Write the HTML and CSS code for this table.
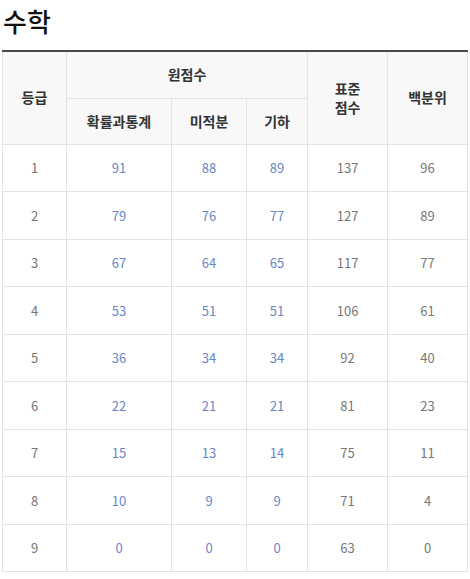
FILE: index.html
```html
<!DOCTYPE html>
<html lang="ko">
<head>
<meta charset="utf-8">
<link rel="stylesheet" href="styles.css">
</head>
<body>
<h2 class="title">수학</h2>
<table class="grade-table">
  <colgroup>
    <col class="c1"><col class="c2"><col class="c3"><col class="c4"><col class="c5"><col class="c6">
  </colgroup>
  <thead>
    <tr class="h1">
      <th rowspan="2">등급</th>
      <th colspan="3">원점수</th>
      <th rowspan="2">표준<br>점수</th>
      <th rowspan="2">백분위</th>
    </tr>
    <tr class="h2">
      <th>확률과통계</th>
      <th>미적분</th>
      <th>기하</th>
    </tr>
  </thead>
  <tbody>
    <tr><td>1</td><td class="raw">91</td><td class="raw">88</td><td class="raw">89</td><td>137</td><td>96</td></tr>
    <tr><td>2</td><td class="raw">79</td><td class="raw">76</td><td class="raw">77</td><td>127</td><td>89</td></tr>
    <tr><td>3</td><td class="raw">67</td><td class="raw">64</td><td class="raw">65</td><td>117</td><td>77</td></tr>
    <tr><td>4</td><td class="raw">53</td><td class="raw">51</td><td class="raw">51</td><td>106</td><td>61</td></tr>
    <tr><td>5</td><td class="raw">36</td><td class="raw">34</td><td class="raw">34</td><td>92</td><td>40</td></tr>
    <tr><td>6</td><td class="raw">22</td><td class="raw">21</td><td class="raw">21</td><td>81</td><td>23</td></tr>
    <tr><td>7</td><td class="raw">15</td><td class="raw">13</td><td class="raw">14</td><td>75</td><td>11</td></tr>
    <tr><td>8</td><td class="raw">10</td><td class="raw">9</td><td class="raw">9</td><td>71</td><td>4</td></tr>
    <tr><td>9</td><td class="raw">0</td><td class="raw">0</td><td class="raw">0</td><td>63</td><td>0</td></tr>
  </tbody>
</table>
</body>
</html>
```
FILE: styles.css
```css
html, body {
  margin: 0;
  padding: 0;
  background: #fff;
}
body {
  padding: 0 2px;
  font-family: "Noto Sans CJK KR", "Noto Sans", sans-serif;
}
.title {
  margin: 0;
  padding: 3px 0 0 1px;
  height: 50px;
  box-sizing: border-box;
  font-size: 26px;
  line-height: 36px;
  font-weight: 500;
  color: #111;
}
.grade-table {
  border-collapse: collapse;
  table-layout: fixed;
  width: 465px;
  border-top: 2px solid #4a4a4a;
}
.c1 { width: 64px; }
.c2 { width: 105px; }
.c3 { width: 75px; }
.c4 { width: 61px; }
.c5 { width: 80px; }
.c6 { width: 80px; }
.grade-table th,
.grade-table td {
  border: 1px solid #e3e3e3;
  text-align: center;
  vertical-align: middle;
  padding: 0;
}
.grade-table th {
  background: #f8f8f8;
  font-size: 14px;
  font-weight: 700;
  color: #333;
  line-height: 19px;
}
.h1 { height: 47px; }
.h2 { height: 46px; }
.grade-table td {
  height: 46.5px;
  font-size: 13px;
  font-weight: 400;
  color: #777;
}
.grade-table td.raw {
  color: #6a86c6;
}
```
